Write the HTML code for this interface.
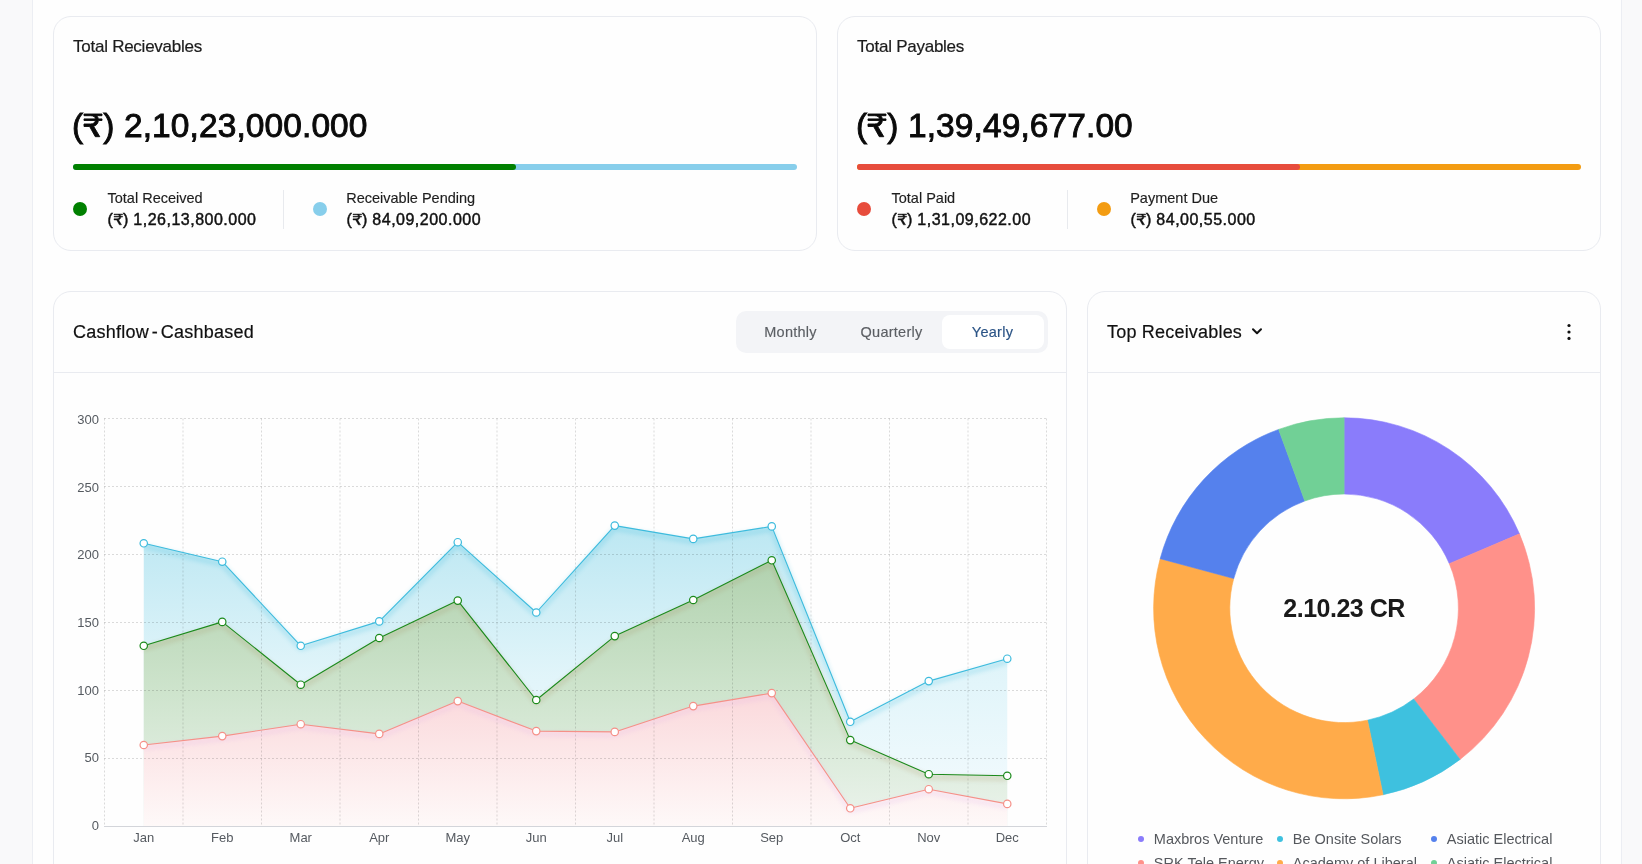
<!DOCTYPE html><html><head><meta charset="utf-8"><title>Dashboard</title><style>
*{box-sizing:border-box;margin:0;padding:0}
html,body{width:1642px;height:864px;overflow:hidden;background:#f9f9fa;font-family:"Liberation Sans",sans-serif;color:#111}
.abs{position:absolute;white-space:nowrap}
.wrap{position:absolute;left:32px;top:-200px;width:1590px;height:1300px;background:#fefefe;border-left:1px solid #eceef3;border-right:1px solid #eceef3}
.card{position:absolute;background:#fefefe;border:1px solid #e9ebf0;border-radius:18px}
.t{line-height:1}
</style></head><body>
<div style="position:absolute;left:0;top:0;width:1642px;height:864px;will-change:transform">
<div class="wrap"></div>
<div class="card" style="left:53px;top:16px;width:764px;height:235px"></div>
<div class="abs t" style="left:73px;top:37.51px;font-size:17px;letter-spacing:-0.25px;-webkit-text-stroke:0.2px #1c1c1c;color:#1c1c1c">Total Recievables</div>
<div class="abs t" style="left:72px;top:108.64px;font-size:33.5px;letter-spacing:0.1px;-webkit-text-stroke:0.9px #0a0a0a;color:#0a0a0a">(<svg width="18.00" height="22.70" viewBox="0 0 18 22.7" overflow="visible" style="vertical-align:0;margin:0 0.90px 0 1.20px"><path d="M0 0H18V1.7H12.6C13.6 2.6 14.2 3.6 14.4 4.9H18V6.5H14.4C14.1 9.4 12.4 11.6 9.6 12.3L15.8 22.7H11.3L5.6 12.5H0V10H6.6C9.4 10 11.1 8.6 11.4 6.5H0V4.9H11.4C11.1 2.9 9.5 1.7 6.6 1.7H0Z" fill="#0a0a0a" stroke="#0a0a0a" stroke-width="0.90"/></svg>)<span style="margin-left:9.3px">2,10,23,000.000</span></div>
<div class="abs" style="left:73px;top:164px;width:724px;height:6px;border-radius:3px;background:#87ceeb"></div>
<div class="abs" style="left:73px;top:164px;width:443px;height:6px;border-radius:3px;background:#008000"></div>
<div class="abs" style="left:73px;top:202px;width:14px;height:14px;border-radius:7px;background:#008000"></div>
<div class="abs t" style="left:107.5px;top:190.53px;font-size:14.5px;-webkit-text-stroke:0.15px #1e1e1e;color:#1e1e1e">Total Received</div>
<div class="abs t" style="left:107.5px;top:211.56px;font-size:16px;letter-spacing:0.5px;-webkit-text-stroke:0.45px #111;color:#111">(<svg width="8.60" height="10.84" viewBox="0 0 18 22.7" overflow="visible" style="vertical-align:0;margin:0 0.43px 0 0.57px"><path d="M0 0H18V1.7H12.6C13.6 2.6 14.2 3.6 14.4 4.9H18V6.5H14.4C14.1 9.4 12.4 11.6 9.6 12.3L15.8 22.7H11.3L5.6 12.5H0V10H6.6C9.4 10 11.1 8.6 11.4 6.5H0V4.9H11.4C11.1 2.9 9.5 1.7 6.6 1.7H0Z" fill="#111" stroke="#111" stroke-width="0.94"/></svg>)<span style="margin-left:4.6px">1,26,13,800.000</span></div>
<div class="abs" style="left:313px;top:202px;width:14px;height:14px;border-radius:7px;background:#87ceeb"></div>
<div class="abs t" style="left:346.2px;top:190.53px;font-size:14.5px;-webkit-text-stroke:0.15px #1e1e1e;color:#1e1e1e">Receivable Pending</div>
<div class="abs t" style="left:346.5px;top:211.56px;font-size:16px;letter-spacing:0.5px;-webkit-text-stroke:0.45px #111;color:#111">(<svg width="8.60" height="10.84" viewBox="0 0 18 22.7" overflow="visible" style="vertical-align:0;margin:0 0.43px 0 0.57px"><path d="M0 0H18V1.7H12.6C13.6 2.6 14.2 3.6 14.4 4.9H18V6.5H14.4C14.1 9.4 12.4 11.6 9.6 12.3L15.8 22.7H11.3L5.6 12.5H0V10H6.6C9.4 10 11.1 8.6 11.4 6.5H0V4.9H11.4C11.1 2.9 9.5 1.7 6.6 1.7H0Z" fill="#111" stroke="#111" stroke-width="0.94"/></svg>)<span style="margin-left:4.6px">84,09,200.000</span></div>
<div class="abs" style="left:283px;top:190px;width:1px;height:39px;background:#e8eaee"></div>
<div class="card" style="left:837px;top:16px;width:764px;height:235px"></div>
<div class="abs t" style="left:857px;top:37.51px;font-size:17px;letter-spacing:-0.25px;-webkit-text-stroke:0.2px #1c1c1c;color:#1c1c1c">Total Payables</div>
<div class="abs t" style="left:856px;top:108.64px;font-size:33.5px;letter-spacing:0.1px;-webkit-text-stroke:0.9px #0a0a0a;color:#0a0a0a">(<svg width="18.00" height="22.70" viewBox="0 0 18 22.7" overflow="visible" style="vertical-align:0;margin:0 0.90px 0 1.20px"><path d="M0 0H18V1.7H12.6C13.6 2.6 14.2 3.6 14.4 4.9H18V6.5H14.4C14.1 9.4 12.4 11.6 9.6 12.3L15.8 22.7H11.3L5.6 12.5H0V10H6.6C9.4 10 11.1 8.6 11.4 6.5H0V4.9H11.4C11.1 2.9 9.5 1.7 6.6 1.7H0Z" fill="#0a0a0a" stroke="#0a0a0a" stroke-width="0.90"/></svg>)<span style="margin-left:9.3px">1,39,49,677.00</span></div>
<div class="abs" style="left:857px;top:164px;width:724px;height:6px;border-radius:3px;background:#f39c12"></div>
<div class="abs" style="left:857px;top:164px;width:443px;height:6px;border-radius:3px;background:#e74c3c"></div>
<div class="abs" style="left:857px;top:202px;width:14px;height:14px;border-radius:7px;background:#e74c3c"></div>
<div class="abs t" style="left:891.5px;top:190.53px;font-size:14.5px;-webkit-text-stroke:0.15px #1e1e1e;color:#1e1e1e">Total Paid</div>
<div class="abs t" style="left:891.5px;top:211.56px;font-size:16px;letter-spacing:0.5px;-webkit-text-stroke:0.45px #111;color:#111">(<svg width="8.60" height="10.84" viewBox="0 0 18 22.7" overflow="visible" style="vertical-align:0;margin:0 0.43px 0 0.57px"><path d="M0 0H18V1.7H12.6C13.6 2.6 14.2 3.6 14.4 4.9H18V6.5H14.4C14.1 9.4 12.4 11.6 9.6 12.3L15.8 22.7H11.3L5.6 12.5H0V10H6.6C9.4 10 11.1 8.6 11.4 6.5H0V4.9H11.4C11.1 2.9 9.5 1.7 6.6 1.7H0Z" fill="#111" stroke="#111" stroke-width="0.94"/></svg>)<span style="margin-left:4.6px">1,31,09,622.00</span></div>
<div class="abs" style="left:1097px;top:202px;width:14px;height:14px;border-radius:7px;background:#f39c12"></div>
<div class="abs t" style="left:1130.2px;top:190.53px;font-size:14.5px;-webkit-text-stroke:0.15px #1e1e1e;color:#1e1e1e">Payment Due</div>
<div class="abs t" style="left:1130.5px;top:211.56px;font-size:16px;letter-spacing:0.5px;-webkit-text-stroke:0.45px #111;color:#111">(<svg width="8.60" height="10.84" viewBox="0 0 18 22.7" overflow="visible" style="vertical-align:0;margin:0 0.43px 0 0.57px"><path d="M0 0H18V1.7H12.6C13.6 2.6 14.2 3.6 14.4 4.9H18V6.5H14.4C14.1 9.4 12.4 11.6 9.6 12.3L15.8 22.7H11.3L5.6 12.5H0V10H6.6C9.4 10 11.1 8.6 11.4 6.5H0V4.9H11.4C11.1 2.9 9.5 1.7 6.6 1.7H0Z" fill="#111" stroke="#111" stroke-width="0.94"/></svg>)<span style="margin-left:4.6px">84,00,55.000</span></div>
<div class="abs" style="left:1067px;top:190px;width:1px;height:39px;background:#e8eaee"></div>
<div class="card" style="left:53px;top:291px;width:1014px;height:800px"></div>
<div class="abs" style="left:54px;top:372px;width:1012px;height:1px;background:#e9ebf0"></div>
<div class="abs t" style="left:73px;top:322.56px;font-size:18px;letter-spacing:0.25px;word-spacing:-2.5px;-webkit-text-stroke:0.2px #111;color:#111">Cashflow - Cashbased</div>
<div class="abs" style="left:736px;top:311px;width:312px;height:42px;border-radius:10px;background:#f3f4f7"></div>
<div class="abs" style="left:942px;top:315px;width:102px;height:34px;border-radius:8px;background:#ffffff"></div>
<div class="abs t" style="left:730.5px;width:120px;text-align:center;top:324.73px;font-size:14.5px;letter-spacing:0.25px;-webkit-text-stroke:0.15px #5b5e63;color:#5b5e63">Monthly</div>
<div class="abs t" style="left:831.5px;width:120px;text-align:center;top:324.73px;font-size:14.5px;letter-spacing:0.25px;-webkit-text-stroke:0.15px #5b5e63;color:#5b5e63">Quarterly</div>
<div class="abs t" style="left:932.5px;width:120px;text-align:center;top:324.73px;font-size:14.5px;letter-spacing:0.25px;-webkit-text-stroke:0.15px #2b5486;color:#2b5486">Yearly</div>
<div class="card" style="left:1087px;top:291px;width:514px;height:800px"></div>
<div class="abs" style="left:1088px;top:372px;width:512px;height:1px;background:#e9ebf0"></div>
<div class="abs t" style="left:1107px;top:322.56px;font-size:18px;letter-spacing:0.2px;-webkit-text-stroke:0.2px #111;color:#111">Top Receivables</div>
<svg class="abs" style="left:1250px;top:326px" width="14" height="10" viewBox="0 0 14 10"><path d="M3 3.2L7 7.2L11 3.2" fill="none" stroke="#111" stroke-width="2" stroke-linecap="round" stroke-linejoin="round"/></svg>
<svg class="abs" style="left:1564px;top:322px" width="10" height="20" viewBox="0 0 10 20"><circle cx="5" cy="3.5" r="1.6" fill="#111"/><circle cx="5" cy="10" r="1.6" fill="#111"/><circle cx="5" cy="16.4" r="1.6" fill="#111"/></svg>
<svg class="abs" style="left:0;top:0" width="1642" height="864" viewBox="0 0 1642 864"><defs><linearGradient id="gb" x1="0" y1="0" x2="0" y2="1"><stop offset="0" stop-color="rgb(176,227,240)"/><stop offset="0.5" stop-color="rgb(220,243,249)"/><stop offset="1" stop-color="rgb(244,251,254)"/></linearGradient><linearGradient id="gg" x1="0" y1="0" x2="0" y2="1"><stop offset="0" stop-color="rgb(175,207,167)"/><stop offset="0.5" stop-color="rgb(204,226,200)"/><stop offset="1" stop-color="rgb(235,243,235)"/></linearGradient><linearGradient id="gr" x1="0" y1="0" x2="0" y2="1"><stop offset="0" stop-color="rgb(253,216,220)"/><stop offset="1" stop-color="rgb(255,249,249)"/></linearGradient><filter id="sh" x="-5%" y="-20%" width="110%" height="140%"><feGaussianBlur stdDeviation="2.5"/><feOffset dy="3"/><feComponentTransfer><feFuncA type="linear" slope="0.45"/></feComponentTransfer></filter></defs><polygon points="143.75,826.5 143.75,543.30 222.25,561.70 300.75,645.80 379.25,621.40 457.75,542.20 536.25,612.50 614.75,525.60 693.25,538.90 771.75,526.40 850.25,721.80 928.75,681.10 1007.25,658.70 1007.25,826.5" fill="url(#gb)" fill-opacity="0.85"/><polygon points="143.75,826.5 143.75,645.80 222.25,621.90 300.75,684.70 379.25,638.00 457.75,600.60 536.25,700.00 614.75,636.10 693.25,600.00 771.75,560.30 850.25,740.10 928.75,774.20 1007.25,775.80 1007.25,826.5" fill="url(#gg)" fill-opacity="0.9"/><polygon points="143.75,826.5 143.75,745.00 222.25,736.10 300.75,724.20 379.25,733.90 457.75,701.10 536.25,731.10 614.75,731.90 693.25,706.10 771.75,693.10 850.25,808.30 928.75,789.20 1007.25,803.90 1007.25,826.5" fill="url(#gr)" fill-opacity="0.95"/><path d="M104.0 758.5H1047.0 M104.0 690.5H1047.0 M104.0 622.5H1047.0 M104.0 554.5H1047.0 M104.0 486.5H1047.0 M104.0 418.5H1047.0 M104.5 418.5V826.5 M183.0 418.5V826.5 M261.5 418.5V826.5 M340.0 418.5V826.5 M418.5 418.5V826.5 M497.0 418.5V826.5 M575.5 418.5V826.5 M654.0 418.5V826.5 M732.5 418.5V826.5 M811.0 418.5V826.5 M889.5 418.5V826.5 M968.0 418.5V826.5 M1046.5 418.5V826.5" stroke="#000" stroke-opacity="0.14" stroke-width="1" stroke-dasharray="2 2" fill="none"/><path d="M104.0 826.5H1047.0" stroke="#d3d5da" stroke-width="1"/><g filter="url(#sh)"><polyline points="143.75,543.30 222.25,561.70 300.75,645.80 379.25,621.40 457.75,542.20 536.25,612.50 614.75,525.60 693.25,538.90 771.75,526.40 850.25,721.80 928.75,681.10 1007.25,658.70" fill="none" stroke="#3dbbdd" stroke-width="2.5" stroke-linejoin="round"/></g><polyline points="143.75,543.30 222.25,561.70 300.75,645.80 379.25,621.40 457.75,542.20 536.25,612.50 614.75,525.60 693.25,538.90 771.75,526.40 850.25,721.80 928.75,681.10 1007.25,658.70" fill="none" stroke="#3dbbdd" stroke-width="1.1" stroke-linejoin="round"/><g filter="url(#sh)" opacity="0.8"><polyline points="143.75,645.80 222.25,621.90 300.75,684.70 379.25,638.00 457.75,600.60 536.25,700.00 614.75,636.10 693.25,600.00 771.75,560.30 850.25,740.10 928.75,774.20 1007.25,775.80" fill="none" stroke="#a08050" stroke-width="2.5" stroke-linejoin="round"/></g><polyline points="143.75,645.80 222.25,621.90 300.75,684.70 379.25,638.00 457.75,600.60 536.25,700.00 614.75,636.10 693.25,600.00 771.75,560.30 850.25,740.10 928.75,774.20 1007.25,775.80" fill="none" stroke="#1b8a1b" stroke-width="1.1" stroke-linejoin="round"/><g filter="url(#sh)" opacity="0.7"><polyline points="143.75,745.00 222.25,736.10 300.75,724.20 379.25,733.90 457.75,701.10 536.25,731.10 614.75,731.90 693.25,706.10 771.75,693.10 850.25,808.30 928.75,789.20 1007.25,803.90" fill="none" stroke="#d89ce8" stroke-width="2.5" stroke-linejoin="round"/></g><polyline points="143.75,745.00 222.25,736.10 300.75,724.20 379.25,733.90 457.75,701.10 536.25,731.10 614.75,731.90 693.25,706.10 771.75,693.10 850.25,808.30 928.75,789.20 1007.25,803.90" fill="none" stroke="#f59088" stroke-width="1.1" stroke-linejoin="round"/><circle cx="143.75" cy="543.30" r="3.7" fill="#fff" stroke="#3dbbdd" stroke-width="1.2"/><circle cx="222.25" cy="561.70" r="3.7" fill="#fff" stroke="#3dbbdd" stroke-width="1.2"/><circle cx="300.75" cy="645.80" r="3.7" fill="#fff" stroke="#3dbbdd" stroke-width="1.2"/><circle cx="379.25" cy="621.40" r="3.7" fill="#fff" stroke="#3dbbdd" stroke-width="1.2"/><circle cx="457.75" cy="542.20" r="3.7" fill="#fff" stroke="#3dbbdd" stroke-width="1.2"/><circle cx="536.25" cy="612.50" r="3.7" fill="#fff" stroke="#3dbbdd" stroke-width="1.2"/><circle cx="614.75" cy="525.60" r="3.7" fill="#fff" stroke="#3dbbdd" stroke-width="1.2"/><circle cx="693.25" cy="538.90" r="3.7" fill="#fff" stroke="#3dbbdd" stroke-width="1.2"/><circle cx="771.75" cy="526.40" r="3.7" fill="#fff" stroke="#3dbbdd" stroke-width="1.2"/><circle cx="850.25" cy="721.80" r="3.7" fill="#fff" stroke="#3dbbdd" stroke-width="1.2"/><circle cx="928.75" cy="681.10" r="3.7" fill="#fff" stroke="#3dbbdd" stroke-width="1.2"/><circle cx="1007.25" cy="658.70" r="3.7" fill="#fff" stroke="#3dbbdd" stroke-width="1.2"/><circle cx="143.75" cy="645.80" r="3.7" fill="#fff" stroke="#1b8a1b" stroke-width="1.2"/><circle cx="222.25" cy="621.90" r="3.7" fill="#fff" stroke="#1b8a1b" stroke-width="1.2"/><circle cx="300.75" cy="684.70" r="3.7" fill="#fff" stroke="#1b8a1b" stroke-width="1.2"/><circle cx="379.25" cy="638.00" r="3.7" fill="#fff" stroke="#1b8a1b" stroke-width="1.2"/><circle cx="457.75" cy="600.60" r="3.7" fill="#fff" stroke="#1b8a1b" stroke-width="1.2"/><circle cx="536.25" cy="700.00" r="3.7" fill="#fff" stroke="#1b8a1b" stroke-width="1.2"/><circle cx="614.75" cy="636.10" r="3.7" fill="#fff" stroke="#1b8a1b" stroke-width="1.2"/><circle cx="693.25" cy="600.00" r="3.7" fill="#fff" stroke="#1b8a1b" stroke-width="1.2"/><circle cx="771.75" cy="560.30" r="3.7" fill="#fff" stroke="#1b8a1b" stroke-width="1.2"/><circle cx="850.25" cy="740.10" r="3.7" fill="#fff" stroke="#1b8a1b" stroke-width="1.2"/><circle cx="928.75" cy="774.20" r="3.7" fill="#fff" stroke="#1b8a1b" stroke-width="1.2"/><circle cx="1007.25" cy="775.80" r="3.7" fill="#fff" stroke="#1b8a1b" stroke-width="1.2"/><circle cx="143.75" cy="745.00" r="3.7" fill="#fff" stroke="#f59088" stroke-width="1.2"/><circle cx="222.25" cy="736.10" r="3.7" fill="#fff" stroke="#f59088" stroke-width="1.2"/><circle cx="300.75" cy="724.20" r="3.7" fill="#fff" stroke="#f59088" stroke-width="1.2"/><circle cx="379.25" cy="733.90" r="3.7" fill="#fff" stroke="#f59088" stroke-width="1.2"/><circle cx="457.75" cy="701.10" r="3.7" fill="#fff" stroke="#f59088" stroke-width="1.2"/><circle cx="536.25" cy="731.10" r="3.7" fill="#fff" stroke="#f59088" stroke-width="1.2"/><circle cx="614.75" cy="731.90" r="3.7" fill="#fff" stroke="#f59088" stroke-width="1.2"/><circle cx="693.25" cy="706.10" r="3.7" fill="#fff" stroke="#f59088" stroke-width="1.2"/><circle cx="771.75" cy="693.10" r="3.7" fill="#fff" stroke="#f59088" stroke-width="1.2"/><circle cx="850.25" cy="808.30" r="3.7" fill="#fff" stroke="#f59088" stroke-width="1.2"/><circle cx="928.75" cy="789.20" r="3.7" fill="#fff" stroke="#f59088" stroke-width="1.2"/><circle cx="1007.25" cy="803.90" r="3.7" fill="#fff" stroke="#f59088" stroke-width="1.2"/><text x="99" y="830.10" text-anchor="end" font-family="Liberation Sans" font-size="13" fill="#555a60">0</text><text x="99" y="762.43" text-anchor="end" font-family="Liberation Sans" font-size="13" fill="#555a60">50</text><text x="99" y="694.77" text-anchor="end" font-family="Liberation Sans" font-size="13" fill="#555a60">100</text><text x="99" y="627.10" text-anchor="end" font-family="Liberation Sans" font-size="13" fill="#555a60">150</text><text x="99" y="559.43" text-anchor="end" font-family="Liberation Sans" font-size="13" fill="#555a60">200</text><text x="99" y="491.77" text-anchor="end" font-family="Liberation Sans" font-size="13" fill="#555a60">250</text><text x="99" y="424.10" text-anchor="end" font-family="Liberation Sans" font-size="13" fill="#555a60">300</text><text x="143.75" y="841.8" text-anchor="middle" font-family="Liberation Sans" font-size="13" fill="#555a60">Jan</text><text x="222.25" y="841.8" text-anchor="middle" font-family="Liberation Sans" font-size="13" fill="#555a60">Feb</text><text x="300.75" y="841.8" text-anchor="middle" font-family="Liberation Sans" font-size="13" fill="#555a60">Mar</text><text x="379.25" y="841.8" text-anchor="middle" font-family="Liberation Sans" font-size="13" fill="#555a60">Apr</text><text x="457.75" y="841.8" text-anchor="middle" font-family="Liberation Sans" font-size="13" fill="#555a60">May</text><text x="536.25" y="841.8" text-anchor="middle" font-family="Liberation Sans" font-size="13" fill="#555a60">Jun</text><text x="614.75" y="841.8" text-anchor="middle" font-family="Liberation Sans" font-size="13" fill="#555a60">Jul</text><text x="693.25" y="841.8" text-anchor="middle" font-family="Liberation Sans" font-size="13" fill="#555a60">Aug</text><text x="771.75" y="841.8" text-anchor="middle" font-family="Liberation Sans" font-size="13" fill="#555a60">Sep</text><text x="850.25" y="841.8" text-anchor="middle" font-family="Liberation Sans" font-size="13" fill="#555a60">Oct</text><text x="928.75" y="841.8" text-anchor="middle" font-family="Liberation Sans" font-size="13" fill="#555a60">Nov</text><text x="1007.25" y="841.8" text-anchor="middle" font-family="Liberation Sans" font-size="13" fill="#555a60">Dec</text><path d="M1344.10 417.80A190.5 190.5 0 0 1 1519.46 533.87L1449.31 563.64A114.3 114.3 0 0 0 1344.10 494.00Z" fill="#8a7cfb" stroke="#8a7cfb" stroke-width="0.6"/><path d="M1519.46 533.87A190.5 190.5 0 0 1 1460.07 759.43L1413.68 698.98A114.3 114.3 0 0 0 1449.31 563.64Z" fill="#ff918a" stroke="#ff918a" stroke-width="0.6"/><path d="M1460.07 759.43A190.5 190.5 0 0 1 1383.06 794.77L1367.47 720.18A114.3 114.3 0 0 0 1413.68 698.98Z" fill="#3ec1df" stroke="#3ec1df" stroke-width="0.6"/><path d="M1383.06 794.77A190.5 190.5 0 0 1 1160.18 558.67L1233.75 578.52A114.3 114.3 0 0 0 1367.47 720.18Z" fill="#ffab4a" stroke="#ffab4a" stroke-width="0.6"/><path d="M1160.18 558.67A190.5 190.5 0 0 1 1278.63 429.40L1304.82 500.96A114.3 114.3 0 0 0 1233.75 578.52Z" fill="#5581ed" stroke="#5581ed" stroke-width="0.6"/><path d="M1278.63 429.40A190.5 190.5 0 0 1 1344.10 417.80L1344.10 494.00A114.3 114.3 0 0 0 1304.82 500.96Z" fill="#71d096" stroke="#71d096" stroke-width="0.6"/><text x="1344.1" y="617" text-anchor="middle" font-family="Liberation Sans" font-weight="bold" font-size="25" letter-spacing="-0.5" fill="#1a1a1a">2.10.23 CR</text></svg>
<div class="abs" style="left:1138px;top:836px;width:6px;height:6px;border-radius:3px;background:#8a7cfb"></div>
<div class="abs t" style="left:1153.8px;top:831.63px;font-size:14.5px;color:#55585d">Maxbros Venture</div>
<div class="abs" style="left:1277px;top:836px;width:6px;height:6px;border-radius:3px;background:#3ec1df"></div>
<div class="abs t" style="left:1292.8px;top:831.63px;font-size:14.5px;color:#55585d">Be Onsite Solars</div>
<div class="abs" style="left:1431px;top:836px;width:6px;height:6px;border-radius:3px;background:#5581ed"></div>
<div class="abs t" style="left:1446.8px;top:831.63px;font-size:14.5px;color:#55585d">Asiatic Electrical</div>
<div class="abs" style="left:1138px;top:860px;width:6px;height:6px;border-radius:3px;background:#ff918a"></div>
<div class="abs t" style="left:1153.8px;top:855.63px;font-size:14.5px;color:#55585d">SRK Tele Energy</div>
<div class="abs" style="left:1277px;top:860px;width:6px;height:6px;border-radius:3px;background:#ffab4a"></div>
<div class="abs t" style="left:1292.8px;top:855.63px;font-size:14.5px;color:#55585d">Academy of Liberal</div>
<div class="abs" style="left:1431px;top:860px;width:6px;height:6px;border-radius:3px;background:#71d096"></div>
<div class="abs t" style="left:1446.8px;top:855.63px;font-size:14.5px;color:#55585d">Asiatic Electrical</div>
</div>
</body></html>
